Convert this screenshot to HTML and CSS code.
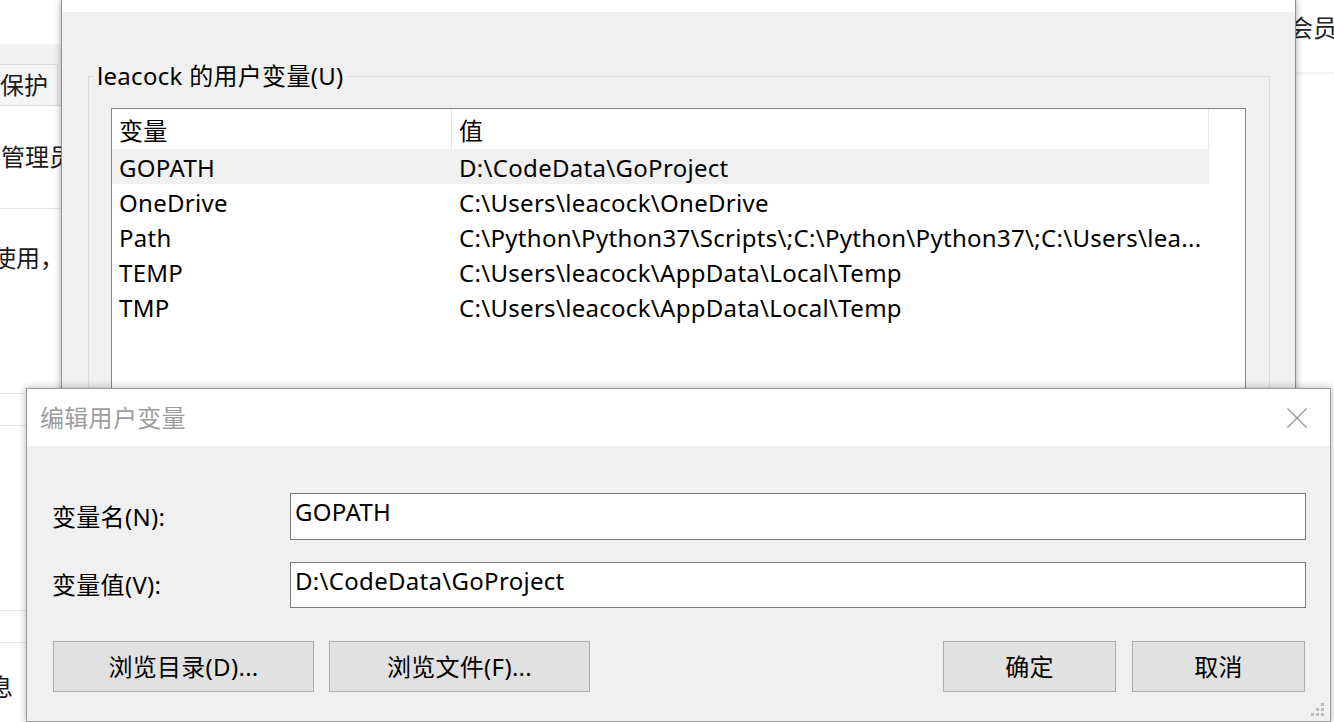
FILE: index.html
```html
<!DOCTYPE html>
<html lang="zh-CN">
<head>
<meta charset="utf-8">
<title>编辑用户变量</title>
<link rel="stylesheet" href="styles.css">
</head>
<body>
<div class="desktop">
  <div class="app">
    <div class="app-left">
      <div class="app-top"></div>
      <div class="tabbar"><div class="tab">保护</div></div>
      <div class="item item-a">管理员</div>
      <div class="item item-b"><span class="cut-8">使用，</span></div>
      <div class="item item-c"></div>
      <div class="item item-d"></div>
      <div class="item item-e"></div>
      <div class="item item-f"><span class="cut-12">息</span></div>
    </div>
    <div class="app-right">
      <div class="app-header"><span class="vip">会员</span></div>
    </div>
  </div>

  <div class="window env">
    <div class="env-title"></div>
    <div class="env-body">
      <fieldset class="group">
        <legend>leacock 的用户变量(U)</legend>
        <div class="listview">
          <div class="lv-head">
            <div class="hcol hcol-name">变量</div>
            <div class="hcol hcol-val">值</div>
          </div>
          <div class="lv-row selected"><div class="cell cell-name">GOPATH</div><div class="cell cell-val">D:\CodeData\GoProject</div></div>
          <div class="lv-row"><div class="cell cell-name">OneDrive</div><div class="cell cell-val">C:\Users\leacock\OneDrive</div></div>
          <div class="lv-row"><div class="cell cell-name">Path</div><div class="cell cell-val">C:\Python\Python37\Scripts\;C:\Python\Python37\;C:\Users\lea...</div></div>
          <div class="lv-row"><div class="cell cell-name">TEMP</div><div class="cell cell-val">C:\Users\leacock\AppData\Local\Temp</div></div>
          <div class="lv-row"><div class="cell cell-name">TMP</div><div class="cell cell-val">C:\Users\leacock\AppData\Local\Temp</div></div>
        </div>
      </fieldset>
    </div>
  </div>

  <div class="window edit">
    <div class="edit-title">
      <span class="edit-caption">编辑用户变量</span>
      <svg class="close" width="20" height="20" viewBox="0 0 20 20" aria-hidden="true">
        <path d="M0.5 0.5 L19.5 19.5 M19.5 0.5 L0.5 19.5" stroke="#9a9a9a" stroke-width="1.4" fill="none"/>
      </svg>
    </div>
    <div class="edit-body">
      <div class="field">
        <label class="field-label">变量名(N):</label>
        <div class="input">GOPATH</div>
      </div>
      <div class="field field-2">
        <label class="field-label">变量值(V):</label>
        <div class="input">D:\CodeData\GoProject</div>
      </div>
      <div class="buttons">
        <button class="btn btn-wide btn-first">浏览目录(D)...</button>
        <button class="btn btn-wide">浏览文件(F)...</button>
        <span class="spacer"></span>
        <button class="btn btn-narrow">确定</button>
        <button class="btn btn-narrow btn-last">取消</button>
      </div>
    </div>
    <svg class="grip" width="14" height="14" viewBox="0 0 14 14" aria-hidden="true">
      <rect x="10" y="0" width="3" height="3" fill="#bcbcbc"/>
      <rect x="5" y="5" width="3" height="3" fill="#bcbcbc"/>
      <rect x="10" y="5" width="3" height="3" fill="#bcbcbc"/>
      <rect x="0" y="10" width="3" height="3" fill="#bcbcbc"/>
      <rect x="5" y="10" width="3" height="3" fill="#bcbcbc"/>
      <rect x="10" y="10" width="3" height="3" fill="#bcbcbc"/>
    </svg>
  </div>
</div>
</body>
</html>
```
FILE: styles.css
```css
* { box-sizing: border-box; }
html, body { margin: 0; padding: 0; }
body {
  width: 1334px;
  height: 722px;
  overflow: hidden;
  background: #fff;
  font-family: "Noto Sans", "Noto Sans CJK SC", sans-serif;
  font-size: 24px;
  letter-spacing: 0.3px;
  color: #000;
}
.desktop { position: relative; width: 1334px; height: 722px; overflow: hidden; }

/* background application */
.app { display: flex; height: 100%; }
.app-left { width: 70px; display: flex; flex-direction: column; color: #1a1a1a; letter-spacing: 0; }
.app-top { height: 45px; }
.tabbar { height: 62px; background: #f2f2f2; padding-top: 20px; border-bottom: 1px solid #d9d9d9; }
.tab {
  width: 58px; height: 41px;
  border-top: 1px solid #dadada; border-right: 1px solid #dadada;
  background: #f5f5f5; line-height: 40px; white-space: nowrap; overflow: hidden;
}
.item { border-bottom: 1px solid #e6e6e6; white-space: nowrap; overflow: hidden; line-height: 30px; }
.item-a { height: 104px; display: flex; align-items: center; padding-left: 1px; }
.item-b { height: 188px; padding-top: 34px; }
.item-c { height: 33px; }
.item-d { height: 188px; }
.item-e { height: 32px; }
.item-f { height: 80px; border-bottom: 0; padding-top: 29px; }
.cut-8 { display: inline-block; margin-left: -8px; }
.cut-12 { display: inline-block; margin-left: -11px; }
.app-right { flex: 1; }
.app-header {
  height: 73px; display: flex; justify-content: flex-end; align-items: flex-start;
  padding-top: 12px; border-bottom: 1px solid #f0f0f0;
  box-shadow: 0 2px 3px rgba(0,0,0,.04);
  color: #222; overflow: hidden; letter-spacing: 0;
}
.vip { margin-right: -3px; line-height: 32px; }

/* back window: environment variables */
.window { position: absolute; }
.env {
  left: 61px; top: 0; width: 1235px; height: 800px;
  background: #f0f0f0;
  border-left: 1px solid #8f8f8f; border-right: 1px solid #8f8f8f;
  box-shadow: 0 0 7px rgba(0,0,0,.35);
}
.env-title { height: 12px; background: #fff; }
.env-body { padding: 49px 25px 0 26px; }
.group {
  margin: 0; min-width: 0;
  border: 1px solid #dcdcdc;
  padding: 17px 23px 0 22px;
  height: 400px;
}
.group legend {
  margin-left: -18px; padding: 0 4px;
  line-height: 30px; color: #000;
}
.listview { background: #fff; border: 1px solid #828790; height: 400px; }
.lv-head { display: flex; height: 40px; width: 1097px; }
.hcol { display: flex; align-items: center; padding-left: 7px; border-right: 1px solid #e5e5e5; }
.hcol-name { width: 340px; }
.hcol-val { width: 757px; }
.lv-row { display: flex; height: 35px; width: 1097px; align-items: center; padding-top: 1px; }
.lv-row.selected { background: #f0f0f0; }
.cell { white-space: nowrap; overflow: hidden; padding-left: 7px; }
.cell-name { width: 340px; }
.cell-val { width: 757px; padding-right: 7px; }

/* front dialog: edit user variable */
.edit {
  left: 26px; top: 388px; width: 1305px; height: 334px;
  background: #f0f0f0;
  border: 1px solid #9b9b9b;
  box-shadow: 0 0 8px rgba(0,0,0,.3);
}
.edit-title {
  height: 57px; background: #fff;
  display: flex; align-items: center; justify-content: space-between;
  padding: 0 23px 0 13px;
}
.edit-caption { color: #9d9d9d; line-height: 30px; }
.close { display: block; }
.edit-body { padding: 47px 24px 0 25px; }
.field { display: flex; align-items: center; }
.field-2 { margin-top: 22px; }
.field-label { width: 238px; line-height: 30px; }
.input {
  flex: 1; height: 47px;
  border: 1px solid #7a7a7a; background: #fff;
  padding: 3px 4px; line-height: 30px; white-space: nowrap;
}
.field-2 .input { height: 46px; }
.buttons { display: flex; gap: 15px; margin-top: 33px; }
.spacer { flex: 1; }
.btn {
  height: 51px; padding: 0;
  background: #e1e1e1; border: 1px solid #adadad;
  font: inherit; letter-spacing: inherit; color: #000; line-height: 30px;
}
.btn-wide { width: 261px; }
.btn-narrow { width: 173px; }
.btn-first { margin-left: 1px; }
.btn-last { margin-left: 1px; margin-right: 1px; }
.grip { position: absolute; top: 314px; right: 5px; }
```
